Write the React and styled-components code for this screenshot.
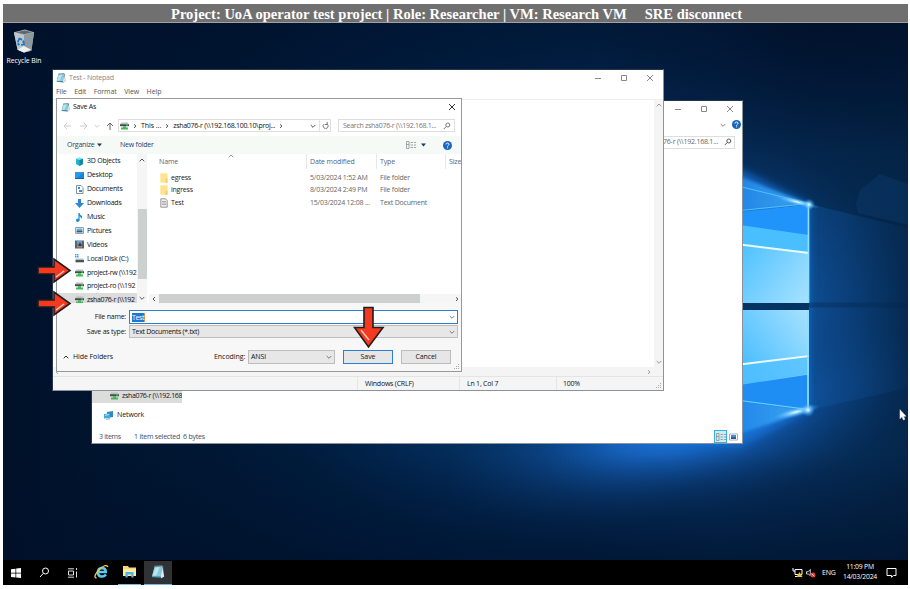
import React from "react";
import styled, { createGlobalStyle, css } from "styled-components";

const GlobalStyle = createGlobalStyle`
  * { box-sizing: border-box; }
  body { margin: 0; background: #fff; overflow: hidden; }
  svg { display: block; flex: none; }
`;

const Screen = styled.div`
  width: 910px;
  height: 589px;
  padding: 4px 2px 4px 3px;
  position: relative;
  display: flex;
  flex-direction: column;
  font-family: "Open Sans", "Noto Sans", sans-serif;
  font-size: 7px;
  line-height: 10px;
  letter-spacing: -0.22px;
  color: #111;
  white-space: nowrap;
`;

const Banner = styled.header`
  height: 19px;
  flex: none;
  background: #707070;
  border-bottom: 1px solid #a5a09c;
  color: #fff;
  font: bold 14.54px/20px "Liberation Serif", serif;
  letter-spacing: 0;
  padding-left: 168px;
  display: flex;
  gap: 18px;
`;

const Desktop = styled.main`
  position: relative;
  height: 537px;
  flex: none;
  overflow: hidden;
`;

const Backdrop = styled.div`
  position: absolute;
  inset: 0;
`;

const Shortcut = styled.div`
  position: absolute;
  left: 3px;
  top: 5px;
  width: 36px;
  display: flex;
  flex-direction: column;
  align-items: center;
  gap: 2px;
  color: #fff;
  font-size: 6.9px;
`;

const Window = styled.section`
  position: absolute;
  left: ${(p) => p.$x}px;
  top: ${(p) => p.$y}px;
  width: ${(p) => p.$w}px;
  height: ${(p) => p.$h}px;
  background: #fff;
  border: 1px solid ${(p) => p.$border || "#8c9299"};
  ${(p) => !p.$border && "border-top-color: #24364c; border-left-color: #24364c;"}
  display: flex;
  flex-direction: column;
  overflow: hidden;
`;

const Row = styled.div`
  display: flex;
  align-items: center;
  flex: none;
  height: ${(p) => p.$h}px;
  padding-left: ${(p) => p.$pl || 0}px;
  padding-right: ${(p) => p.$pr || 0}px;
  gap: ${(p) => p.$gap || 0}px;
  background: ${(p) => p.$bg || "transparent"};
`;

const Spacer = styled.div`
  flex: 1;
`;

const Label = styled.span`
  color: ${(p) => p.$c || "inherit"};
  letter-spacing: ${(p) => (p.$ls === undefined ? "inherit" : p.$ls + "px")};
  width: ${(p) => (p.$w ? p.$w + "px" : "auto")};
  flex: none;
`;

const Captions = styled.div`
  display: flex;
  align-items: center;
  gap: 18px;
`;

const Menu = styled.nav`
  height: 14px;
  flex: none;
  display: flex;
  align-items: center;
  gap: 7.5px;
  padding-left: 3px;
  color: #555;
  letter-spacing: -0.1px;
`;

const Editor = styled.div`
  flex: 1;
  display: flex;
  justify-content: flex-end;
  border-top: 1px solid #eee;
`;

const VTrack = styled.div`
  width: 9px;
  background: #f4f4f4;
  display: flex;
  flex-direction: column;
  align-items: center;
  justify-content: space-between;
  padding: 2px 0;
`;

const HTrack = styled.div`
  height: 9px;
  flex: none;
  background: #f4f4f4;
  display: flex;
  align-items: center;
  justify-content: space-between;
  padding: 0 12px 0 2px;
`;

const StatusBar = styled.footer`
  height: 14px;
  flex: none;
  background: #f5f5f5;
  border-top: 1px solid #e4e4e4;
  display: flex;
  padding-left: 304px;
`;

const StatusCell = styled.div`
  width: ${(p) => p.$w}px;
  border-left: 1px solid #e6e6e6;
  padding-left: ${(p) => p.$pl}px;
  line-height: 14px;
`;

const Field = styled.div`
  width: ${(p) => p.$w}px;
  height: ${(p) => p.$h || 14}px;
  flex: none;
  border: 1px solid ${(p) => (p.$active ? "#2b7fd3" : p.$dark ? "#bdbdbd" : "#dedede")};
  background: ${(p) => (p.$dark ? "#e7e7e7" : "#fff")};
  display: flex;
  align-items: center;
  gap: ${(p) => p.$gap || 0}px;
  padding: 0 ${(p) => p.$pr ?? 2}px 0 ${(p) => p.$pl ?? 2}px;
  margin-left: ${(p) => p.$ml || 0}px;
`;

const Divider = styled.div`
  width: 1px;
  align-self: stretch;
  background: #e2e2e2;
`;

const Selected = styled.span`
  background: #1b78d0;
  color: #fff;
  line-height: 9px;
  border-right: 1px solid #d98f45;
  letter-spacing: -0.35px;
`;

const Browser = styled.div`
  display: flex;
  height: 149px;
  flex: none;
`;

const Tree = styled.div`
  width: 80px;
  padding-left: 18px;
  overflow: hidden;
  padding-top: 0.5px;
`;

const TreeItem = styled.div`
  height: 13.9px;
  margin-left: -18px;
  padding-left: 18px;
  display: flex;
  align-items: center;
  gap: 3px;
  background: ${(p) => (p.$on ? "#dcdcdc" : "transparent")};
`;

const TreeScroll = styled.div`
  width: 10px;
  background: #f5f5f5;
  display: flex;
  flex-direction: column;
  align-items: center;
  padding: 3px 0 2px;
`;

const TreeThumb = styled.div`
  width: 9px;
  height: 71px;
  margin: 46px 0 16px;
  background: #ccd1cf;
`;

const Files = styled.div`
  flex: 1;
  display: flex;
  flex-direction: column;
  min-width: 0;
  overflow: hidden;
  padding-left: 2px;
`;

const cols = css`
  display: grid;
  grid-template-columns: 147px 70px 69px 20px;
  align-items: center;
  padding-left: 10px;
`;

const FileHead = styled.div`
  ${cols}
  height: 15px;
  margin-bottom: 3px;
  flex: none;
  color: #55657b;
  position: relative;
  letter-spacing: -0.12px;
`;

const HeadCell = styled.div`
  height: 15px;
  line-height: 15px;
  border-left: 1px solid ${(p) => (p.$first ? "transparent" : "#e3e8ec")};
  padding-left: ${(p) => (p.$first ? 0 : 3)}px;
  margin-left: ${(p) => (p.$first ? -1 : 0)}px;
`;

const SortMark = styled.div`
  position: absolute;
  left: 79px;
  top: -1px;
`;

const FileRow = styled.div`
  ${cols}
  height: 12.3px;
  color: #666;
`;

const FileCell = styled.div`
  padding-left: 4px;
`;

const FileName = styled.div`
  display: flex;
  align-items: center;
  gap: 3px;
  padding-left: 1px;
  color: #222;
`;

const FileScroll = styled.div`
  height: 9px;
  display: flex;
  align-items: center;
  justify-content: space-between;
  background: #f5f5f5;
  padding: 0 2px 0 3px;
`;

const FileThumb = styled.div`
  width: 261px;
  height: 9px;
  margin: 0 auto 0 3px;
  background: #ccd1cf;
`;

const Form = styled.div`
  flex: 1;
  background: #f7f7f7;
  padding-top: 7px;
  display: flex;
  flex-direction: column;
  gap: 1px;
`;

const FormLabel = styled.span`
  width: 69px;
  margin-right: 3px;
  text-align: right;
`;

const Button = styled.button`
  width: 50px;
  height: 14px;
  padding: 0;
  border: ${(p) => (p.$primary ? "1.5px solid #2b7fd3" : "1px solid #bcbcbc")};
  background: #e6e6e6;
  font: inherit;
  letter-spacing: -0.1px;
  color: inherit;
  display: flex;
  align-items: center;
  justify-content: center;
`;

const DialogFoot = styled.div`
  display: flex;
  align-items: center;
  margin-top: 11px;
  height: 14px;
  padding-left: 6px;
`;

const Grip = styled.div`
  position: absolute;
  right: 1px;
  bottom: 1px;
`;

const ExplorerFill = styled.div`
  height: 237px;
  flex: none;
`;

const ExplorerItem = styled.div`
  width: ${(p) => (p.$on ? 90 : 140)}px;
  height: ${(p) => (p.$on ? 14 : 18)}px;
  margin-bottom: ${(p) => (p.$on ? 3 : 0)}px;
  flex: none;
  display: flex;
  align-items: center;
  gap: 3px;
  overflow: hidden;
  padding-left: ${(p) => (p.$on ? 18 : 12)}px;
  background: ${(p) => (p.$on ? "#dcdcdc" : "transparent")};
`;

const ViewToggle = styled.div`
  width: 13px;
  height: 13px;
  border: 1px solid #35b0df;
  background: #cdeaf5;
  display: flex;
  align-items: center;
  justify-content: center;
`;

const Taskbar = styled.footer`
  height: 25px;
  flex: none;
  background: #000;
  color: #fff;
  display: flex;
  align-items: center;
  padding-left: 8px;
  padding-right: 11px;
`;

const TaskButton = styled.div`
  height: 24px;
  display: flex;
  align-items: center;
  justify-content: center;
  background: ${(p) => (p.$active ? "#303236" : "transparent")};
  border-bottom: 1.5px solid ${(p) => (p.$open ? "#76b9ed" : "transparent")};
  width: ${(p) => (p.$open ? (p.$active ? 28 : 23) : 24)}px;
  margin-right: ${(p) => (p.$active ? 0 : p.$open ? 3 : 5)}px;
`;

const Clock = styled.div`
  width: 36px;
  text-align: center;
  font-size: 6.8px;
  letter-spacing: -0.2px;
  margin-top: -1px;
`;

const Callout = styled.div`
  position: absolute;
  left: ${(p) => p.$x}px;
  top: ${(p) => p.$y}px;
`;

const Stroke = ({ d, w = 6, h = 6, c = "#777", sw = 1 }) => (
  <svg width={w} height={h} viewBox={`0 0 ${w} ${h}`} fill="none" stroke={c} strokeWidth={sw}>
    <path d={d} />
  </svg>
);
const Down = ({ c = "#777" }) => <Stroke d="M.7 2 L3 4.3 L5.3 2" c={c} />;
const Up = ({ c = "#777" }) => <Stroke d="M.7 4.3 L3 2 L5.3 4.3" c={c} />;
const Right = ({ c = "#555" }) => <Stroke d="M1 1.3 L3 3.1 L1 4.9" w={4} c={c} />;
const Left = ({ c = "#777" }) => <Stroke d="M3 1 L1 3 L3 5" w={4} c={c} />;
const Caret = () => (
  <svg width="5" height="4"><path d="M0 0.5h5L2.5 3.5z" fill="#1b3765" /></svg>
);
const WinButtons = () => (
  <Captions>
    <Stroke d="M1 4.5H7" w={8} h={8} c="#888" />
    <Stroke d="M1.5 1.5h5v5h-5z" w={8} h={8} c="#888" />
    <Stroke d="M1 1L7 7M7 1L1 7" w={8} h={8} c="#888" />
  </Captions>
);
const Help = () => (
  <svg width="9" height="9" viewBox="0 0 9 9">
    <circle cx="4.5" cy="4.5" r="4.5" fill="#1766c0" />
    <path d="M3 3.5Q3 2 4.5 2T6 3.4Q6 4 4.6 5v.6M4.6 6.4v1" fill="none" stroke="#fff" />
  </svg>
);
const Lens = ({ c = "#777" }) => (
  <svg width="8" height="8" viewBox="0 0 8 8" fill="none" stroke={c}>
    <circle cx="4.8" cy="3" r="2" /><path d="M3.3 4.5L.8 7" />
  </svg>
);
const DetailsIcon = () => (
  <svg width="10" height="8" viewBox="0 0 10 8" fill="none" stroke="#8b9296">
    <path d="M.5.5h2.5v7H.5zM0 3.5h3M4.5 1.5H7M8 1.5h2M4.5 4H7M8 4h2M4.5 6.5H7M8 6.5h2" strokeWidth=".8" />
  </svg>
);
const PictureIcon = () => (
  <svg width="9" height="8" viewBox="0 0 9 8">
    <path d="M.5 1h8v6h-8z" fill="#fff" stroke="#a3afb9" /><path d="M2 2h5v2H2z" fill="#3d91e4" /><path d="M2 4h5v2H2z" fill="#365f74" />
  </svg>
);
const Notepad = ({ s = 9 }) => (
  <svg width={s} height={s} viewBox="0 0 16 16">
    <path d="M4 2L14 1 15 13 12 15 1 14z" fill="#397684" />
    <path d="M4 2L13 1 11 13 1 13z" fill="#8ccbdc" /><path d="M5 3L10 2 6 12 2 12z" fill="#b9e6ef" />
    <path d="M4 1.5L13 1" stroke="#738b94" strokeWidth="1.5" /><path d="M13 2l2 11-3 2-1-2z" fill="#dfe9e9" />
  </svg>
);
const NetDrive = () => (
  <svg width="9" height="8" viewBox="0 0 9 8">
    <path d="M1.3 .4h6.4L9 2.8H0z" fill="#b8bdbc" /><path d="M0 2.3h9v1.9H0z" fill="#414b48" />
    <path d="M6.2 3h1.8" stroke="#50e26a" /><path d="M3 4.2h3v1.3h2v2H1v-2h2z" fill="#43ba55" />
  </svg>
);
const Folder = () => (
  <svg width="8" height="10" viewBox="0 0 8 10"><path d="M.3.3h7.2v9.4H.3z" fill="#ffe38d" /><path d="M6 5.5h1.5v4.2H5z" fill="#efcf70" /></svg>
);
const TextFile = () => (
  <svg width="8" height="10" viewBox="0 0 8 10"><path d="M.8.8h4.7l1.7 1.7v6.7H.8z" fill="#eee" stroke="#999" /><path d="M2 3.5h4M2 5h4M2 6.5h4" stroke="#909090" strokeWidth=".7" /></svg>
);
const Network = () => (
  <svg width="10" height="9" viewBox="0 0 10 9"><path d="M3 1l6-1v6l-6 1z" fill="#2e89bd" /><path d="M0 3l6-.8v4.6L0 7.6z" fill="#41a9dd" /><path d="M1 3.6l4-.5v1L1 5z" fill="#96dcf7" /><path d="M2 8.3l4-.6" stroke="#8b9ba4" /></svg>
);

const treeArt = {
  cube: <><path d="M1 2l3.5-1.5L8 2v5L4.5 9 1 7z" fill="#20b4d0" /><path d="M1 2l3.5 1L8 2 4.5.5z" fill="#7de9f2" /><path d="M4.5 3L8 2v5L4.5 9z" fill="#1586a5" /></>,
  desktop: <><path d="M0 1h9v6H0z" fill="#1585d8" /><path d="M0 1h9L2 7H0z" fill="#279be9" /><path d="M0 7.5h9" stroke="#1269af" /></>,
  doc: <><path d="M1.5.5H6L8 2.5v6H1.5z" fill="#fff" stroke="#7f929c" /><path d="M3 2h2v2H3zM4 5h3v2H4z" fill="#3392bf" /></>,
  down: <path d="M3 0h3v4h3L4.5 9 0 4h3z" fill="#2e86d4" />,
  music: <><path d="M4 0v7" stroke="#168fd8" strokeWidth="1.2" /><path d="M4 0Q5 2 7 3 7.5 5 6 6 6.5 4 4 3z" fill="#168fd8" /><circle cx="2.7" cy="7.2" r="1.7" fill="#168fd8" /></>,
  pic: <><path d="M.5 1.5h8v6h-8z" fill="#fff" stroke="#91a5b1" /><path d="M1.5 2.5h6v2h-6z" fill="#62afe0" /><path d="M1.5 4.5h6v2h-6z" fill="#315e77" /></>,
  video: <><path d="M0 .5h9v8H0z" fill="#5a6470" /><path d="M2 1h5v3H2z" fill="#5ba5d8" /><path d="M2 4.5h5v3H2z" fill="#b38b50" /><path d="M5 2l2 4H3z" fill="#2c3e65" /></>,
  disk: <><path d="M0 0h1.5v1.5H0zM2 0h1.5v1.5H2zM0 2h1.5v1.5H0zM2 2h1.5v1.5H2z" fill="#2fa6e0" /><path d="M1 4.5h7L9 6H0z" fill="#b9c1c5" /><path d="M.5 6H9v2.3H.5z" fill="#4a5357" /></>,
};
const TreeIcon = ({ kind }) =>
  kind === "net" ? <NetDrive /> : <svg width="9" height="9" viewBox="0 0 9 9">{treeArt[kind]}</svg>;

const places = [
  ["cube", "3D Objects"], ["desktop", "Desktop"], ["doc", "Documents"],
  ["down", "Downloads"], ["music", "Music"], ["pic", "Pictures"],
  ["video", "Videos"], ["disk", "Local Disk (C:)"], ["net", "project-rw (\\\\192", -0.3],
  ["net", "project-ro (\\\\192", -0.3], ["net", "zsha076-r (\\\\192", -0.33],
];
const files = [
  ["folder", "egress", "5/03/2024 1:52 AM", "File folder"],
  ["folder", "ingress", "8/03/2024 2:49 PM", "File folder"],
  ["text", "Test", "15/03/2024 12:08 ...", "Text Document"],
];

const GripDots = () => (
  <svg width="6" height="6"><path d="M4 0h1v1H4zM2 2h1v1H2zM4 2h1v1H4zM0 4h1v1H0zM2 4h1v1H2zM4 4h1v1H4z" fill="#aaa" /></svg>
);

const Wallpaper = () => (
  <svg width="905" height="537" viewBox="3 23 905 537">
    <defs>
      <linearGradient id="base" x1="0" x2="1">
        <stop offset="0" stopColor="#001129" /><stop offset=".25" stopColor="#001835" /><stop offset=".5" stopColor="#00234a" />
        <stop offset=".8" stopColor="#052c58" /><stop offset="1" stopColor="#042548" />
      </linearGradient>
      <linearGradient id="shade" x1="0" x2="0" y1="0" y2="1">
        <stop offset="0" stopColor="#00102a" stopOpacity=".6" /><stop offset=".3" stopColor="#00102a" stopOpacity="0" />
        <stop offset=".8" stopColor="#00102a" stopOpacity="0" /><stop offset="1" stopColor="#00102a" stopOpacity=".65" />
      </linearGradient>
      <radialGradient id="corner" gradientUnits="userSpaceOnUse" cx="0" cy="0" r="1" gradientTransform="translate(830 23) scale(240 130)">
        <stop offset="0" stopColor="#00102a" stopOpacity=".85" /><stop offset="1" stopColor="#00102a" stopOpacity="0" />
      </radialGradient>
      <radialGradient id="halo" gradientUnits="userSpaceOnUse" cx="0" cy="0" r="1" gradientTransform="translate(690 310) scale(225 175)">
        <stop offset="0" stopColor="#168af0" stopOpacity=".9" /><stop offset=".5" stopColor="#115db0" stopOpacity=".6" /><stop offset="1" stopColor="#0b3e7d" stopOpacity="0" />
      </radialGradient>
      <radialGradient id="pool" gradientUnits="userSpaceOnUse" cx="0" cy="0" r="1" gradientTransform="translate(690 425) rotate(-14) scale(250 90)">
        <stop offset="0" stopColor="#2282f0" stopOpacity="1" /><stop offset=".3" stopColor="#1869ca" stopOpacity=".8" /><stop offset=".65" stopColor="#0e4b93" stopOpacity=".4" /><stop offset="1" stopColor="#0a3971" stopOpacity="0" />
      </radialGradient>
      <radialGradient id="wash" gradientUnits="userSpaceOnUse" cx="0" cy="0" r="1" gradientTransform="translate(620 430) scale(330 120)">
        <stop offset="0" stopColor="#0f55a5" stopOpacity=".6" /><stop offset="1" stopColor="#0a3971" stopOpacity="0" />
      </radialGradient>
      <linearGradient id="paneTop" x1="0" x2="1" y1="0" y2="1"><stop offset="0" stopColor="#35b8ff" /><stop offset="1" stopColor="#a8e2ff" /></linearGradient>
      <linearGradient id="paneLow" x1="0" x2="1" y1="1" y2="0"><stop offset="0" stopColor="#2cb2ff" /><stop offset="1" stopColor="#a8e2ff" /></linearGradient>
      <radialGradient id="flare"><stop offset="0" stopColor="#fff" /><stop offset=".25" stopColor="#a6e4ff" stopOpacity=".8" /><stop offset="1" stopColor="#2299ff" stopOpacity="0" /></radialGradient>
      <linearGradient id="beam" x1="0" x2="1"><stop offset="0" stopColor="#1b86ee" /><stop offset="1" stopColor="#4db8ff" /></linearGradient>
      <linearGradient id="sideGlow" x1="0" x2="1"><stop offset="0" stopColor="#1155a0" stopOpacity=".45" /><stop offset="1" stopColor="#1155a0" stopOpacity=".08" /></linearGradient>
      <filter id="soft" x="-30%" y="-30%" width="160%" height="160%"><feGaussianBlur stdDeviation="4" /></filter>
      <filter id="soft2" x="-30%" y="-30%" width="160%" height="160%"><feGaussianBlur stdDeviation="1.6" /></filter>
    </defs>
    <path d="M3 23h905v537H3z" fill="url(#base)" />
    <path d="M3 23h905v537H3z" fill="url(#halo)" />
    <path d="M3 23h905v537H3z" fill="url(#wash)" />
    <path d="M3 23h905v537H3z" fill="url(#pool)" />
    <path d="M3 23h905v537H3z" fill="url(#shade)" />
    <path d="M3 23h905v180H3z" fill="url(#corner)" />
    <path d="M809 204L908 228V388L809 410z" fill="url(#sideGlow)" />
    <path d="M856 204L860 190 880 174 908 184V225L858 213z" fill="#14508c" opacity=".22" />
    <path d="M640 130L740 170 809 204V410L740 446 640 440z" fill="#1674da" opacity=".8" filter="url(#soft)" />
    <path d="M722 170L809 204L722 214z" fill="url(#beam)" filter="url(#soft2)" opacity=".75" />
    <path d="M722 440L809 410L722 396z" fill="url(#beam)" filter="url(#soft2)" opacity=".75" />
    <path d="M700 302h109v9H700z" fill="#063462" />
    <path d="M740 213L809 205V303H740z" fill="url(#paneTop)" />
    <path d="M740 208L809 201V235L740 225z" fill="#2094fb" transform="translate(0 4)" />
    <path d="M740 225L809 235V252L740 244z" fill="#4abfff" />
    <path d="M740 244.5L809 253" stroke="#e9fbff" strokeWidth="2" />
    <path d="M740 208L809 201M740 184L809 201" transform="translate(0 2.5)" stroke="#4ec2ff" />
    <path d="M740 310H809V410L740 401z" fill="url(#paneLow)" />
    <path d="M740 363L809 355V374L740 385z" fill="#51bfff" opacity=".7" />
    <path d="M740 376L809 365.5V401L740 392z" transform="translate(0 9)" fill="#1e8df4" />
    <path d="M740 365L809 356.5" transform="translate(0 -.5)" stroke="#e9fbff" strokeWidth="2" />
    <path d="M740 401L809 410" transform="translate(0 -.5)" stroke="#6ad5ff" />
    <path d="M808.5 204V303M808 310V410" stroke="#8ce0ff" strokeWidth="1.7" />
    <path d="M809 305h99" stroke="#04264b" strokeWidth="5" opacity=".35" />
    <ellipse cx="797" cy="202" rx="24" ry="3.5" fill="url(#flare)" transform="rotate(14 797 202)" />
    <circle cx="809" cy="204.500" r="6" fill="url(#flare)" />
    <ellipse cx="796" cy="412" rx="25" ry="5" fill="url(#flare)" transform="rotate(-14 796 412)" />
    <circle cx="808" cy="410" r="7" fill="url(#flare)" />
  </svg>
);

const RedRight = () => (
  <svg width="35" height="27" viewBox="0 0 35 27"><path d="M1 10h16V2l16 11.5L17 25v-8H1z" fill="#f33a20" stroke="#241b1a" strokeWidth="1.6" /><path d="M19 20l8-6" stroke="#ffc9bd" strokeWidth="1.4" /></svg>
);
const RedDown = () => (
  <svg width="32" height="43" viewBox="0 0 32 43"><path d="M11 1.5h9v20h10L15.5 41 1.5 21.5H11z" fill="#f33a20" stroke="#241b1a" strokeWidth="1.6" /><path d="M8 24l8 10" stroke="#ffc9bd" strokeWidth="1.4" /></svg>
);

function SaveDialog() {
  return (
    <Window $x={53} $y={75} $w={406} $h={274} $border="#999">
      <Row $h={16} $pl={4} $pr={5} $gap={3}>
        <Notepad />
        <Label>Save As</Label>
        <Spacer />
        <Stroke d="M1 1L7 7M7 1L1 7" w={8} h={8} c="#333" />
      </Row>
      <Row $h={21} $pl={6}>
        <Stroke d="M8 4H1M4 1L1 4L4 7" w={9} h={8} c="#ccc" />
        <Row $h={8} $pl={8}><Stroke d="M0 4H7M4 1L7 4L4 7" w={9} h={8} c="#ccc" /></Row>
        <Row $h={8} $pl={5} $pr={6}><Down c="#ccc" /></Row>
        <Stroke d="M4 8V1M1 4L4 1L7 4" w={8} h={8} c="#666" />
        <Field $w={213} $h={13} $ml={4} $pl={1} $pr={1}>
          <NetDrive />
          <Row $h={10} $pl={4} $gap={4}>
            <Right /><Label $ls={-0.05}>This ...</Label><Right />
            <Label $ls={-0.28}>zsha076-r (\\192.168.100.10\proj...</Label><Right />
          </Row>
          <Spacer /><Down c="#555" />
          <Row $h={11} $pl={3} $gap={2}>
            <Divider />
            <Stroke d="M2.2 2A2.5 2.500 0 1 0 5 2M5.2 0V2.5H3" w={7} h={7} c="#777" />
          </Row>
        </Field>
        <Field $w={117} $h={13} $ml={7} $pl={4} $pr={3}>
          <Label $c="#777" $ls={-0.28}>Search zsha076-r (\\192.168.1...</Label><Spacer /><Lens />
        </Field>
      </Row>
      <Row $h={18} $pl={10} $pr={9} $bg="#f5faf7">
        <Label $c="#24426f" $w={30}>Organize</Label><Caret />
        <Row $h={10} $pl={18}><Label $c="#24426f">New folder</Label></Row>
        <Spacer />
        <DetailsIcon />
        <Row $h={10} $pl={5} $pr={17}><Caret /></Row>
        <Help />
      </Row>
      <Browser>
        <Tree>
          {places.map(([kind, name, ls], i) => (
            <TreeItem key={name} $on={i === 10}><TreeIcon kind={kind} /><Label $ls={ls}>{name}</Label></TreeItem>
          ))}
        </Tree>
        <TreeScroll><Up c="#555" /><TreeThumb /><Down c="#555" /></TreeScroll>
        <Files>
          <FileHead>
            <HeadCell $first>Name</HeadCell><HeadCell>Date modified</HeadCell><HeadCell>Type</HeadCell><HeadCell>Size</HeadCell>
            <SortMark><Up c="#999" /></SortMark>
          </FileHead>
          {files.map(([kind, name, date, type]) => (
            <FileRow key={name}>
              <FileName>{kind === "folder" ? <Folder /> : <TextFile />}{name}</FileName>
              <FileCell>{date}</FileCell><FileCell>{type}</FileCell>
            </FileRow>
          ))}
          <Spacer />
          <FileScroll><Left c="#555" /><FileThumb /><Right /></FileScroll>
        </Files>
      </Browser>
      <Form>
        <Row $h={14}>
          <FormLabel>File name:</FormLabel>
          <Field $w={329} $active><Selected>Test</Selected><Spacer /><Down /></Field>
        </Row>
        <Row $h={13}>
          <FormLabel>Save as type:</FormLabel>
          <Field $w={329} $h={13} $dark><Label $ls={-0.3}>Text Documents (*.txt)</Label><Spacer /><Down /></Field>
        </Row>
        <DialogFoot>
          <Up c="#333" />
          <Row $h={16} $pl={4}><Label $w={141} $ls={-0.08}>Hide Folders</Label></Row>
          <Label $w={34} $ls={-0.05}>Encoding:</Label>
          <Field $w={87} $dark><Label $ls={-0.1}>ANSI</Label><Spacer /><Down /></Field>
          <Row $h={14} $pl={8} $gap={8}><Button $primary>Save</Button><Button>Cancel</Button></Row>
        </DialogFoot>
      </Form>
      <Grip><GripDots /></Grip>
    </Window>
  );
}

export default function App() {
  return (
    <>
      <GlobalStyle />
      <Screen>
        <Banner>
          <span>Project: UoA operator test project | Role: Researcher | VM: Research VM</span>
          <span>SRE disconnect</span>
        </Banner>
        <Desktop>
          <Backdrop><Wallpaper /></Backdrop>
          <Shortcut>
            <svg width="22" height="26" viewBox="0 0 24 27">
              <path d="M1 4L13 1 23 4 20 24 12 26 5 23z" fill="#a9b1b8" />
              <path d="M1 4L12 7 12 26 5 23z" fill="#c0c7cc" /><path d="M12 7L23 4 20 24 12 26z" fill="#8e989f" />
              <path d="M3 4L13 2 21 4 12 6z" fill="#5e686f" />
              <path d="M5 23l7-4 8 4-8 3z" fill="#edf0f1" />
              <path d="M5 15l2-4 3 1M11 13l1 4-3 1M7 18l-2-2" fill="none" stroke="#1778d2" strokeWidth="2" />
            </svg>
            <Label $ls={-0.1}>Recycle Bin</Label>
          </Shortcut>

          <Window $x={88} $y={77} $w={652} $h={344}>
            <Row $h={16} $pr={8}><Spacer /><WinButtons /></Row>
            <Row $h={15} $pr={1} $gap={6}><Spacer /><Down c="#888" /><Help /></Row>
            <Row $h={20} $pr={7}>
              <Spacer />
              <Field $w={92} $h={13} $pl={0} $pr={2}>
                <Spacer /><Label $c="#666">076-r (\\192.168.1...</Label><Row $h={8} $pl={6}><Lens c="#555" /></Row>
              </Field>
            </Row>
            <ExplorerFill />
            <ExplorerItem $on><NetDrive /><Label $ls={-0.33}>zsha076-r (\\192.168</Label></ExplorerItem>
            <ExplorerItem><Network /><Label $ls={-0.1}>Network</Label></ExplorerItem>
            <Spacer />
            <Row $h={13} $pl={7} $pr={2}>
              <Label $c="#3b4d68" $w={35} $ls={-0.3}>3 items</Label>
              <Label $c="#3b4d68" $w={49}>1 item selected</Label>
              <Label $c="#3b4d68">6 bytes</Label>
              <Spacer />
              <ViewToggle><DetailsIcon /></ViewToggle>
              <Row $h={13} $pl={2} $pr={2}><PictureIcon /></Row>
            </Row>
          </Window>

          <Window $x={49} $y={46} $w={612} $h={322}>
            <Row $h={15} $pl={3} $pr={9} $gap={3}>
              <Notepad s={10} /><Label $c="#888">Test - Notepad</Label><Spacer /><WinButtons />
            </Row>
            <Menu><Label>File</Label><Label>Edit</Label><Label>Format</Label><Label>View</Label><Label>Help</Label></Menu>
            <Editor><VTrack><Up c="#999" /><Down c="#999" /></VTrack></Editor>
            <HTrack><Left c="#aaa" /><Right c="#999" /></HTrack>
            <StatusBar>
              <StatusCell $w={102} $pl={7}>Windows (CRLF)</StatusCell>
              <StatusCell $w={97} $pl={7}>Ln 1, Col 7</StatusCell>
              <StatusCell $w={100} $pl={6}>100%</StatusCell>
            </StatusBar>
            <Grip><GripDots /></Grip>
          </Window>

          <SaveDialog />

          <Callout $x={34} $y={234}><RedRight /></Callout>
          <Callout $x={34} $y={267}><RedRight /></Callout>
          <Callout $x={350} $y={283}><RedDown /></Callout>
          <Callout $x={896} $y={386}>
            <svg width="8" height="12" viewBox="0 0 8 12"><path d="M1 .7v9l2-2 1.4 3.3 1.5-.7L4.6 7.2H7z" fill="#fff" stroke="#ddd" strokeWidth=".6" /></svg>
          </Callout>
        </Desktop>

        <Taskbar>
          <Row $h={24} $pr={18}>
            <svg width="10" height="10" viewBox="0 0 10 10"><path d="M0 1.2L4.5.7V4.7H0zM5.2.6L10 0v4.7H5.2zM0 5.4h4.500v4L0 8.9zM5.2 5.4H10V10l-4.8-.6z" fill="#fff" /></svg>
          </Row>
          <Row $h={24} $pr={17}>
            <svg width="11" height="11" viewBox="0 0 11 11" fill="none" stroke="#fff"><circle cx="6.500" cy="4" r="3" /><path d="M4.4 6.3L1 10" /></svg>
          </Row>
          <Row $h={24} $pr={11}>
            <svg width="11" height="10" viewBox="0 0 11 10" fill="none" stroke="#ddd"><path d="M1.500 3h5v4h-5zM1 .8h6M1 9.2h6M9.500 0v2M9.500 3.500v6" /></svg>
          </Row>
          <TaskButton>
            <svg width="15" height="14" viewBox="0 0 15 14" fill="none"><path d="M12 9.500Q10 12 7 11.500 3.800 11 3.800 7.200 4 3.200 7.800 3q4 0 4 4H4.500" stroke="#5dc9f5" strokeWidth="2.500" /><path d="M2.500 13Q-1.500 12 5 5T14 2" stroke="#f5c742" strokeWidth="1.300" /></svg>
          </TaskButton>
          <TaskButton $open>
            <svg width="13" height="12" viewBox="0 0 13 12"><path d="M0 0h5l1 1.500h7V10H0z" fill="#f8d775" /><path d="M0 3h13v7H0z" fill="#ffe9a3" /><path d="M2.500 6h8v5.500H8.300V8.600H4.700v2.900H2.500z" fill="#4db2e8" /></svg>
          </TaskButton>
          <TaskButton $open $active><Notepad s={14} /></TaskButton>
          <Spacer />
          <svg width="11" height="10" viewBox="0 0 11 10" fill="none" stroke="#fff"><path d="M3 1.500h7v5H3zM1 0v3M1 3h2M3 8.500h3" /><path d="M7.500 4l3 5h-6z" fill="#f5bd2a" stroke="none" /></svg>
          <Row $h={24} $pl={3} $pr={6}>
            <svg width="10" height="10" viewBox="0 0 10 10"><path d="M.5 3.700h1.700L4.300 1.500v6L2.200 6H.5z" fill="none" stroke="#fff" strokeWidth=".8" /><circle cx="7" cy="7" r="2.500" fill="#e33b3b" /><path d="M5.800 5.800l2.400 2.400" stroke="#fff" strokeWidth=".8" /></svg>
          </Row>
          <Label $w={20}>ENG</Label>
          <Clock>11:09 PM<br />14/03/2024</Clock>
          <Row $h={24} $pl={8}>
            <svg width="11" height="11" viewBox="0 0 11 11" fill="none" stroke="#fff"><path d="M1 1.500h9v7H7.500L5.500 10.200V8.500H1z" /></svg>
          </Row>
        </Taskbar>
      </Screen>
    </>
  );
}
